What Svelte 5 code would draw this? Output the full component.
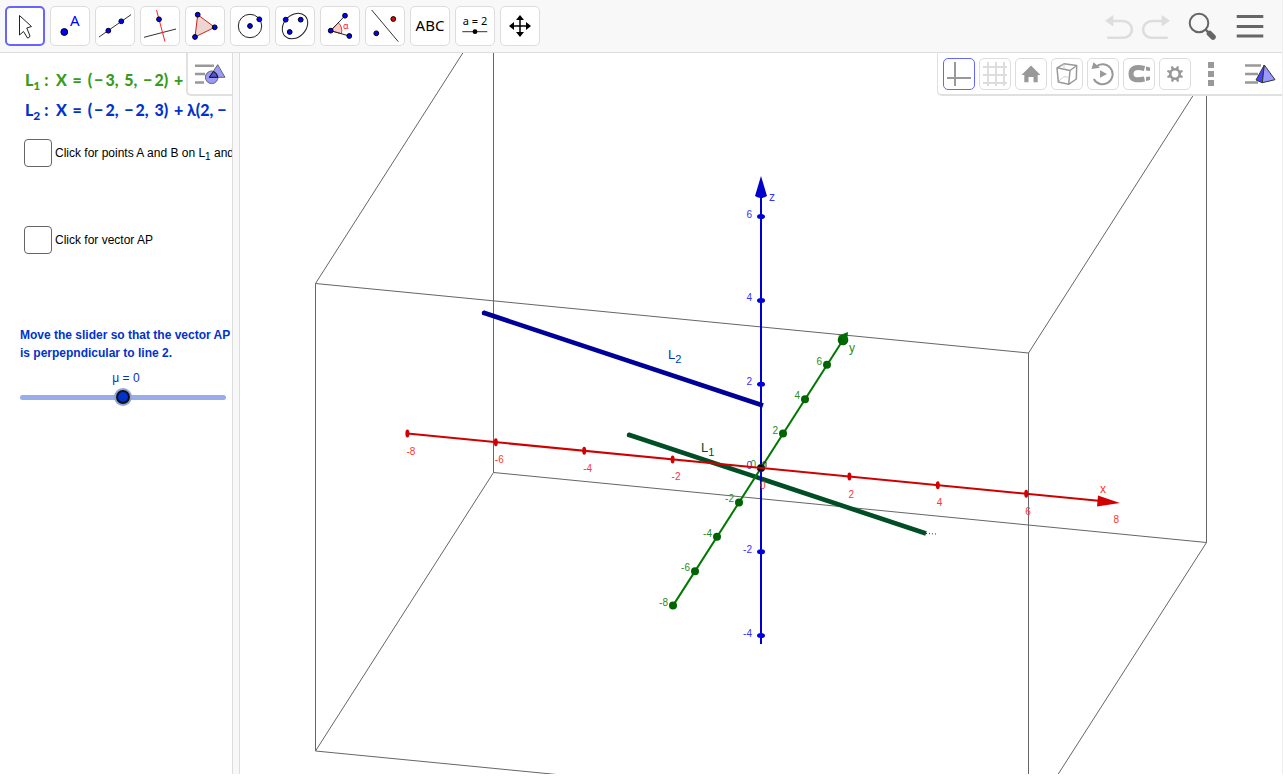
<script>
let selectedTool = $state('Move');
let mu = $state(0);
let showPoints = $state(false);
let showVector = $state(false);
let showAxes = $state(true);

const tools = [
    { name: 'Move', icon: move },
    { name: 'Point', icon: point },
    { name: 'Line', icon: line },
    { name: 'Perpendicular Line', icon: perpendicular },
    { name: 'Polygon', icon: polygon },
    { name: 'Circle with Center', icon: circle },
    { name: 'Ellipse', icon: ellipse },
    { name: 'Angle', icon: angle },
    { name: 'Reflect about Line', icon: reflect },
    { name: 'Text', icon: abc },
    { name: 'Slider', icon: slider },
    { name: 'Move Graphics View', icon: moveView }
];

const styleButtons = [
    { name: 'Show grid', icon: grid },
    { name: 'Back to default view', icon: home },
    { name: 'View direction', icon: cube },
    { name: 'Rotate view', icon: rotate },
    { name: 'Point capturing', icon: magnet },
    { name: 'Settings', icon: gear }
];

// screen vectors of one unit along each axis
const unit = { x: [44.2, 4.3], y: [11, -17.2], z: [0, -41.9] };

const project = (axis, n) => ({ n, x: unit[axis][0] * n, y: unit[axis][1] * n });

const xTicks = [-8, -6, -4, -2, 0, 2, 4, 6, 8].map(n => project('x', n));
const yTicks = [-8, -6, -4, -2, 0, 2, 4, 6].map(n => project('y', n));
const zTicks = [-4, -2, 0, 2, 4, 6].map(n => project('z', n));
</script>

{#snippet dot(x, y, fill = '#00f')}
    <circle cx={x} cy={y} r="2.4" {fill} stroke="#000" />
{/snippet}

{#snippet move()}
    <path d="M10.5 5.5V25L14.5 21.5L18.5 28Q20.5 28 21 26L17.8 18L22.5 16.5Z" fill="#fff" stroke="#222" />
{/snippet}
{#snippet point()}
    <circle cx="10.3" cy="22" r="3.4" fill="#00f" stroke="#000" />
    <text x="16" y="16" font-size="15" fill="#00f">A</text>
{/snippet}
{#snippet line()}
    <path d="M0 27L32 4.7" stroke="#333" />
    {@render dot(9.3, 20.7)}
    {@render dot(22.3, 11.3)}
{/snippet}
{#snippet perpendicular()}
    <path d="M0 27.3L32 19" stroke="#333" />
    <path d="M12.5 0L21 31.7" stroke="#f22" />
    {@render dot(15, 9.3)}
{/snippet}
{#snippet polygon()}
    <path d="M8.7 4.7L25.7 17.3L6 27Z" fill="#edd5d0" stroke="#c22" />
    {@render dot(8.7, 4.7)}
    {@render dot(25.7, 17.3)}
    {@render dot(6, 27)}
{/snippet}
{#snippet circle()}
    <circle cx="16" cy="16" r="11.7" fill="none" stroke="#222" />
    {@render dot(16, 16)}
    {@render dot(25.3, 9.3)}
{/snippet}
{#snippet ellipse()}
    <ellipse cx="16" cy="16" rx="14.2" ry="11" transform="rotate(-45 16 16)" fill="none" stroke="#222" />
    {@render dot(6.7, 9.7)}
    {@render dot(21.7, 9.7)}
    {@render dot(10.7, 22)}
{/snippet}
{#snippet angle()}
    <path d="M6.7 20.7L14.3 12.7A11 11 0 0 1 17.3 23.7Z" fill="#fcc" stroke="#e33" />
    <path d="M21 5.7L6.7 20.7L25.3 26" fill="none" stroke="#222" />
    <text x="19" y="19" font-size="9" fill="#f22">α</text>
    {@render dot(6.7, 20.7)}
    {@render dot(21, 5.7)}
    {@render dot(25.3, 26)}
{/snippet}
{#snippet reflect()}
    <path d="M2.7 0L29.3 31.7" stroke="#333" />
    {@render dot(7.3, 23.3)}
    {@render dot(24.3, 9, '#e00')}
{/snippet}
{#snippet abc()}
    <text x="16" y="21" font-size="15" text-anchor="middle">ABC</text>
{/snippet}
{#snippet slider()}
    <text x="16" y="15" font-size="11" text-anchor="middle">a = 2</text>
    <path d="M3.3 21.7H28.3" stroke="#333" />
    <circle cx="16" cy="21.7" r="2.4" />
{/snippet}
{#snippet moveView()}
    <path d="M8 16H24M16 8V24" stroke="#000" stroke-width="1.5" />
    <path d="M5 16L10 12V20ZM27 16L22 12V20ZM16 5L12 10H20ZM16 27L12 22H20Z" />
{/snippet}

{#snippet grid()}
    <path d="M5 0V24M13 0V24M21 0V24M0 5H24M0 13H24M0 21H24" stroke="#ddd" stroke-width="2" />
{/snippet}
{#snippet home()}
    <path d="M12 3.5L21.5 13H18.7V20.2H14.5V15H9.5V20.2H5.3V13H2.5Z" fill="#999" />
{/snippet}
{#snippet cube()}
    <path d="M2 5.8L9 1.8L21.7 3.5L15 8.5ZM2 5.8L3.3 20L13.7 22.3L15 8.5M21.7 3.5L21.3 17L13.7 22.3" fill="none" stroke="#999" stroke-width="1.5" stroke-linejoin="round" />
    <path d="M9 2V7M9 14.5L4 19M9 14.5L13 15.3" fill="none" stroke="#ccc" />
{/snippet}
{#snippet rotate()}
    <path d="M4.8 5A10 10 0 1 1 2.8 17" fill="none" stroke="#999" stroke-width="2" />
    <path d="M.5 7L2.5 .3L9 5.8ZM9 8.2L16 12L9 15.8Z" fill="#999" />
{/snippet}
{#snippet magnet()}
    <path d="M17.5 6.5C9 4.5 4 5.5 4 11.8S9 18.8 17.5 17" fill="none" stroke="#999" stroke-width="5" />
    <path d="M19 4.5L23 5.5V9L19 8.5ZM19 15L23 14.5V18L19 19Z" fill="#999" />
{/snippet}
{#snippet gear()}
    <circle cx="12" cy="12" r="4.7" fill="none" stroke="#999" stroke-width="2.6" />
    {#each [0, 45, 90, 135, 180, 225, 270, 315] as deg}
        <path d="M10.5 7L11 3.8H13L13.5 7Z" fill="#999" transform="rotate({deg + 22} 12 12)" />
    {/each}
{/snippet}

<div class="app">
    <header class="toolbar">
        <div class="tools">
            {#each tools as tool}
                <button class="tool" class:selected={selectedTool === tool.name} aria-label={tool.name} onclick={() => (selectedTool = tool.name)}>
                    <svg viewBox="0 0 32 32">{@render tool.icon()}</svg>
                </button>
            {/each}
        </div>
        <div class="actions">
            <div class="history">
                <button class="action" aria-label="Undo">
                    <svg viewBox="0 0 32 32">
                        <path d="M9 11H19C32 11 32 27.7 20 27.7H4.3" fill="none" stroke="#ddd" stroke-width="2.6" />
                        <path d="M2 10.8L10.3 5V16.6Z" fill="#ddd" />
                    </svg>
                </button>
                <button class="action" aria-label="Redo">
                    <svg viewBox="0 0 32 32">
                        <path d="M23 11H13C0 11 0 27.7 12 27.7H27.7" fill="none" stroke="#ddd" stroke-width="2.6" />
                        <path d="M30 10.8L21.7 5V16.6Z" fill="#ddd" />
                    </svg>
                </button>
            </div>
            <button class="action" aria-label="Search">
                <svg viewBox="0 0 32 32">
                    <circle cx="12" cy="13" r="9.3" fill="none" stroke="#666" stroke-width="2" />
                    <path d="M18.5 19.5L21.5 22.5" stroke="#666" stroke-width="2.4" />
                    <path d="M22.5 23.5L26 27" stroke="#666" stroke-width="5.6" stroke-linecap="round" />
                </svg>
            </button>
            <button class="action" aria-label="Menu">
                <svg viewBox="0 0 32 32">
                    <path d="M2.7 6.5H29.3M2.7 16.5H29.3M2.7 26H29.3" stroke="#666" stroke-width="3" />
                </svg>
            </button>
        </div>
    </header>

    <main class="views">
        <section class="panel">
            <div class="equations">
                <p class="equation green">L<sub>1</sub> : &nbsp;X&thinsp; =&thinsp; (&thinsp;−&thinsp;3,&thinsp; 5,&thinsp; −&thinsp;2)&thinsp; + λ</p>
                <p class="equation blue">L<sub>2</sub> : &nbsp;X&thinsp; =&thinsp; (&thinsp;−&thinsp;2,&thinsp; −&thinsp;2,&thinsp; 3)&thinsp; + λ(2, −</p>
            </div>
            <div class="checks">
                <label class="check">
                    <input type="checkbox" bind:checked={showPoints} />
                    <span>Click for points A and B on L<sub>1</sub> and</span>
                </label>
                <label class="check">
                    <input type="checkbox" bind:checked={showVector} />
                    <span>Click for vector AP</span>
                </label>
            </div>
            <div class="task">
                <p class="hint">Move the slider so that the vector AP<br />is perpepndicular to line 2.</p>
                <label class="mu" for="mu">μ = {mu}</label>
                <input id="mu" class="slider" type="range" min="-5" max="5" step="0.1" bind:value={mu} />
            </div>
            <button class="panel-style" aria-label="Graphics style bar">
                <svg viewBox="0 0 32 24">
                    <path d="M1 3.7H20M1 12H11M1 20.5H10" stroke="#999" stroke-width="2.4" />
                    <circle cx="17.7" cy="15.3" r="6.3" fill="#99f" stroke="#666" />
                    <path d="M23.7 2.7L15.3 15.3H31Z" fill="#66f" fill-opacity=".65" stroke="#666" />
                    <path d="M19.5 9.5Q23 11 23.8 15.3H15.3Z" fill="#55c" stroke="#111" />
                </svg>
            </button>
        </section>

        <div class="splitter"></div>

        <section class="space">
            <svg class="scene" viewBox="-521 -415 1042 721" preserveAspectRatio="xMidYMid slice">
                <g class="clip-box">
                    <path d="M-267.5 -463V4.5L445.5 74.5V-393.5L267.5 -115L-445.5 -184.5L-267.5 -463" />
                    <path d="M-267.5 4.5L-445.5 283V-184.5M-445.5 283L267.5 352.5V-115M267.5 352.5L445.5 74.5" />
                </g>

                <path d="M-133 -33.5L165 65.5" stroke="#004d26" stroke-width="4.6" />
                <path d="M165 65.5L175 66" stroke="#004d26" stroke-dasharray="1 2" />
                <circle cx="-132" cy="-33" r="2.3" fill="#004d26" />

                <g class="z-axis">
                    <path d="M0 176V-272" stroke="#00c" stroke-width="2" />
                    <path d="M0 -292L-6 -272Q0 -268 6 -272Z" fill="#00c" />
                    {#each zTicks as t}
                        <ellipse cx={t.x} cy={t.y} rx="4" ry="2.5" fill="#00d" />
                        <text x={t.x - 9} y={t.y + 1} text-anchor="end">{t.n}</text>
                    {/each}
                    <text class="name" x="8" y="-267">z</text>
                </g>

                <path d="M-278 -155.5L2 -62.5" stroke="#000099" stroke-width="4.6" />
                <circle cx="-277" cy="-155" r="2.3" fill="#000099" />

                <g class="y-axis">
                    <path d="M-88 137.6L82 -128" stroke="#007800" stroke-width="2" />
                    <circle cx="82" cy="-128" r="5.3" fill="#006400" />
                    <path d="M77 -132L87 -136L86 -126Z" fill="#007000" />
                    {#each yTicks as t}
                        <circle cx={t.x} cy={t.y} r="4" fill="#006400" />
                        <text x={t.x - 5} y={t.y} text-anchor="end">{t.n}</text>
                    {/each}
                    <text class="name" x="88" y="-116">y</text>
                </g>

                <circle r="3.6" fill="#002" />
                <path d="M2 -1V-6H5V-1" fill="none" stroke="#333" />

                <g class="x-axis">
                    <path d="M-353.6 -34.4L340 33" stroke="#d00000" stroke-width="2" />
                    <path d="M337 27.5L359 35L336 38.5Z" fill="#d00000" />
                    {#each xTicks as t}
                        {#if t.n !== 8 && t.n !== 0}
                            <ellipse cx={t.x} cy={t.y} rx="2" ry="4" fill="#d00000" />
                        {/if}
                        <text x={t.x - 1} y={t.y + 21}>{t.n}</text>
                    {/each}
                    <text class="name" x="339" y="25">x</text>
                </g>

                <text class="label" x="-93" y="-109" fill="#0033cc">L<tspan dy="4" font-size="11">2</tspan></text>
                <text class="label" x="-60" y="-16" fill="#004d26">L<tspan dy="4" font-size="11">1</tspan></text>
            </svg>

            <div class="stylebar">
                <button class="style-button" class:selected={showAxes} aria-label="Show axes" onclick={() => (showAxes = !showAxes)}>
                    <svg viewBox="0 0 24 24"><path d="M8 0V24M0 16H24" stroke="#999" stroke-width="2" /></svg>
                </button>
                {#each styleButtons as button}
                    <button class="style-button" aria-label={button.name}>
                        <svg viewBox="0 0 24 24">{@render button.icon()}</svg>
                    </button>
                {/each}
                <button class="style-button plain" aria-label="More">
                    <svg viewBox="0 0 24 24"><path d="M9 0H15V6H9ZM9 9H15V15H9ZM9 18H15V24H9Z" fill="#999" /></svg>
                </button>
                <button class="style-button plain wide" aria-label="3D style bar">
                    <svg viewBox="0 0 32 24">
                        <path d="M1 3.5H17M1 12H14M1 20.5H14" stroke="#999" stroke-width="2.4" />
                        <path d="M20.3 3L12 18L18.3 20.7Z" fill="#44f" stroke="#333" />
                        <path d="M20.3 3L18.3 20.7L31 17.7Z" fill="#99f" stroke="#333" />
                    </svg>
                </button>
            </div>
        </section>
    </main>
</div>

<style>
    :global(body) {
        margin: 0;
        background: #fff;
    }

    .app {
        box-sizing: border-box;
        height: calc(100vh - 2px);
        margin-right: 1px;
        border-right: 1px solid #eee;
        display: flex;
        flex-direction: column;
        font-family: "Liberation Sans", Arial, sans-serif;
        overflow: hidden;
    }

    button {
        box-sizing: border-box;
        padding: 0;
        background: #fff;
        border: 1px solid #ddd;
        display: flex;
        align-items: center;
        justify-content: center;
        cursor: pointer;
    }

    svg {
        display: block;
        flex: none;
    }

    .toolbar {
        flex: none;
        display: flex;
        justify-content: space-between;
        padding: 6px 16px 6px 5px;
        background: #f8f8f8;
        border-bottom: 1px solid #ddd;
    }

    .tools {
        display: flex;
        gap: 5px;
    }

    .tool {
        width: 40px;
        height: 40px;
        border-radius: 5px;
    }

    .tool.selected {
        border: 2px solid #66f;
    }

    .tool svg, .action svg {
        width: 32px;
        height: 32px;
        font-family: "Noto Sans", sans-serif;
    }

    .actions {
        display: flex;
        align-items: center;
        gap: 15px;
    }

    .history {
        display: flex;
        gap: 5px;
    }

    .action {
        border: none;
        background: transparent;
    }

    .views {
        flex: 1;
        min-height: 0;
        display: flex;
    }

    .panel {
        position: relative;
        flex: none;
        width: 232px;
        overflow: hidden;
        white-space: nowrap;
    }

    p {
        margin: 0;
    }

    .equations {
        padding: 12px 0 0 25px;
    }

    .equation {
        font: 900 16px/30px Lato, sans-serif;
    }

    .equation sub {
        font-size: 12px;
        line-height: 0;
    }

    .green {
        color: #389b1e;
    }

    .blue {
        color: #0033cc;
    }

    .checks {
        display: flex;
        flex-direction: column;
        gap: 59px;
        padding: 14px 0 0 24px;
    }

    .check {
        display: flex;
        align-items: center;
        gap: 3px;
        font-size: 12px;
        line-height: 28px;
    }

    .check sub {
        font-size: 10px;
        line-height: 0;
    }

    .check input {
        appearance: none;
        box-sizing: border-box;
        flex: none;
        width: 28px;
        height: 28px;
        margin: 0;
        border: 1px solid #666;
        border-radius: 4px;
    }

    .check input:checked {
        background: #999;
    }

    .task {
        display: flex;
        flex-direction: column;
        padding: 72px 6px 0 20px;
        color: #0033cc;
    }

    .hint {
        font-size: 12px;
        font-weight: bold;
        line-height: 18px;
    }

    .mu {
        margin-top: 7px;
        padding-left: 6px;
        font-size: 12px;
        line-height: 18px;
        text-align: center;
    }

    .slider {
        appearance: none;
        width: 100%;
        height: 18px;
        margin: 1px 0 0;
        background: transparent;
    }

    .slider::-webkit-slider-runnable-track {
        height: 5px;
        border-radius: 3px;
        background: #99adeb;
    }

    .slider::-webkit-slider-thumb {
        appearance: none;
        box-sizing: border-box;
        width: 14px;
        height: 14px;
        margin-top: -5px;
        border: 2px solid #111;
        border-radius: 50%;
        background: #0033cc;
        box-shadow: 0 0 0 2px #8fa3e0;
    }

    .panel-style {
        position: absolute;
        top: 0;
        right: 0;
        width: 46px;
        height: 43px;
        border-width: 0 0 2px 2px;
        border-color: #e0e0e0;
        border-radius: 0 0 0 5px;
    }

    .panel-style svg {
        width: 32px;
        height: 24px;
    }

    .splitter {
        box-sizing: border-box;
        flex: none;
        width: 8px;
        background: #f8f8f8;
        border: solid #ddd;
        border-width: 0 1px;
        cursor: col-resize;
    }

    .space {
        position: relative;
        flex: 1;
        min-width: 0;
    }

    .scene {
        width: 100%;
        height: 100%;
        font-size: 10px;
    }

    .clip-box {
        fill: none;
        stroke: #666;
    }

    .x-axis text {
        fill: #f33;
    }

    .y-axis text {
        fill: #2c8c1a;
    }

    .z-axis text {
        fill: #33f;
    }

    .scene .name {
        font-size: 12px;
    }

    .label {
        font-size: 13px;
    }

    .stylebar {
        position: absolute;
        top: 0;
        right: 0;
        display: flex;
        gap: 4px;
        padding: 5px 5px 4px 5px;
        background: #fff;
        border: solid #e0e0e0;
        border-width: 0 0 2px 1px;
        border-radius: 0 0 0 5px;
    }

    .style-button {
        width: 32px;
        height: 32px;
        border-radius: 5px;
    }

    .style-button.selected {
        border-color: #66f;
    }

    .style-button.plain {
        border: none;
    }

    .style-button svg {
        width: 24px;
        height: 24px;
    }

    .style-button.wide {
        width: 34px;
        margin-left: 12px;
    }

    .style-button.wide svg {
        width: 32px;
    }
</style>
